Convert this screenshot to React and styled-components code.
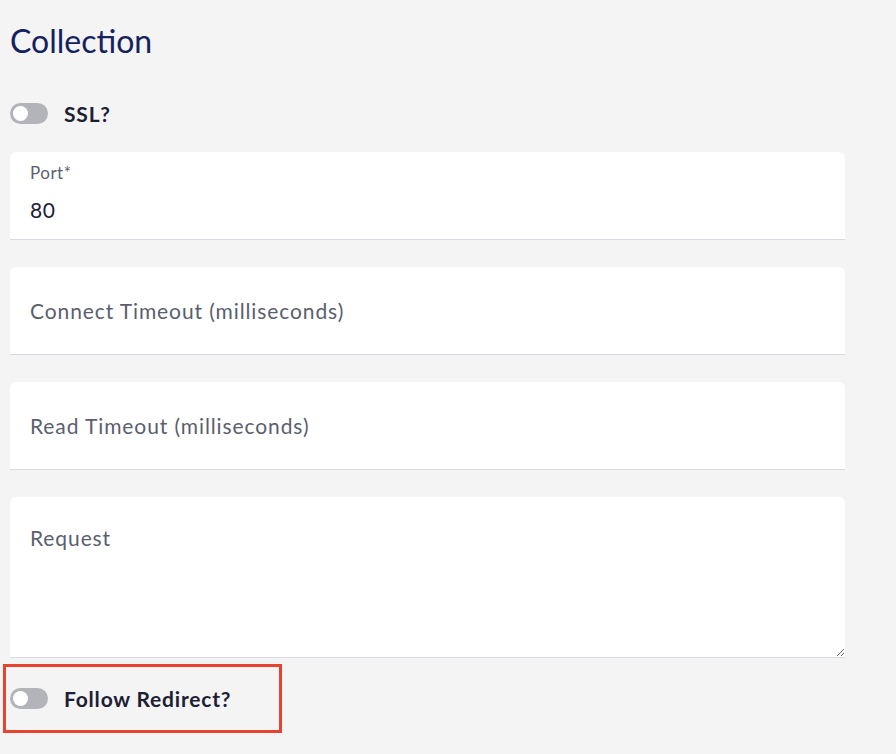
import React from "react";
import styled, { createGlobalStyle } from "styled-components";

const GlobalStyle = createGlobalStyle`
  body {
    margin: 0;
    background: #f4f4f4;
    font-family: "Lato", "Open Sans", sans-serif;
  }
`;

const Page = styled.div`
  padding: 23px 0 0 10px;
  width: 835px;
`;

const Title = styled.h1`
  margin: 0;
  font-size: 32px;
  line-height: 36px;
  font-weight: 400;
  color: #14225f;
`;

const ToggleRow = styled.label`
  display: flex;
  align-items: center;
  gap: 16px;
  height: 22px;
  margin: ${({ $top }) => $top}px 0 0;
`;

const Highlight = styled.div`
  width: 269px;
  height: 63px;
  margin: 6px 0 0 -7px;
  padding-left: 4px;
  border: 3px solid #e8432f;
  display: flex;
  align-items: center;
`;

const Track = styled.span`
  position: relative;
  width: 38px;
  height: 21px;
  border-radius: 11px;
  background: #b3b3ba;
  flex-shrink: 0;

  &::after {
    content: "";
    position: absolute;
    top: 3px;
    left: 3px;
    width: 15px;
    height: 15px;
    border-radius: 50%;
    background: #ffffff;
  }
`;

const ToggleText = styled.span`
  font-size: 21px;
  font-weight: 700;
  letter-spacing: 0.8px;
  color: #1c2034;
`;

const Fields = styled.div`
  display: flex;
  flex-direction: column;
  gap: 27px;
  margin-top: 28px;
`;

const Card = styled.div`
  background: #ffffff;
  border-radius: 6px 6px 0 0;
  border-bottom: 1px solid #d9d9e2;
  box-sizing: border-box;
  height: 88px;
  padding: 11px 20px 0;
`;

const FloatLabel = styled.div`
  font-size: 17px;
  line-height: 20px;
  letter-spacing: 0.5px;
  color: #5a5e6e;
`;

const Value = styled.div`
  margin-top: 15px;
  font-size: 21px;
  line-height: 24px;
  letter-spacing: 0.5px;
  color: #1c2034;
`;

const Input = styled.input`
  display: block;
  width: 100%;
  height: 88px;
  box-sizing: border-box;
  border: none;
  border-bottom: 1px solid #d9d9e2;
  border-radius: 6px 6px 0 0;
  background: #ffffff;
  padding: 0 20px;
  font-family: inherit;
  font-size: 21px;
  letter-spacing: 0.9px;
  color: #1c2034;
  outline: none;

  &::placeholder {
    color: #5a5e6e;
  }
`;

const TextArea = styled.textarea`
  display: block;
  width: 100%;
  height: 161px;
  box-sizing: border-box;
  border: none;
  border-bottom: 1px solid #d9d9e2;
  border-radius: 6px 6px 0 0;
  background: #ffffff;
  padding: 28px 20px 0;
  font-family: inherit;
  font-size: 21px;
  letter-spacing: 0.9px;
  color: #1c2034;
  outline: none;
  resize: vertical;

  &::placeholder {
    color: #5a5e6e;
  }
`;

const Toggle = ({ label }) => (
  <>
    <Track />
    <ToggleText>{label}</ToggleText>
  </>
);

const App = () => {
  return (
    <Page>
      <GlobalStyle />
      <Title>Collection</Title>
      <ToggleRow $top={43}>
        <Toggle label="SSL?" />
      </ToggleRow>
      <Fields>
        <Card>
          <FloatLabel>Port*</FloatLabel>
          <Value>80</Value>
        </Card>
        <Input placeholder="Connect Timeout (milliseconds)" />
        <Input placeholder="Read Timeout (milliseconds)" />
        <TextArea placeholder="Request" />
      </Fields>
      <Highlight>
        <ToggleRow $top={0}>
          <Toggle label="Follow Redirect?" />
        </ToggleRow>
      </Highlight>
    </Page>
  );
};

export default App;
